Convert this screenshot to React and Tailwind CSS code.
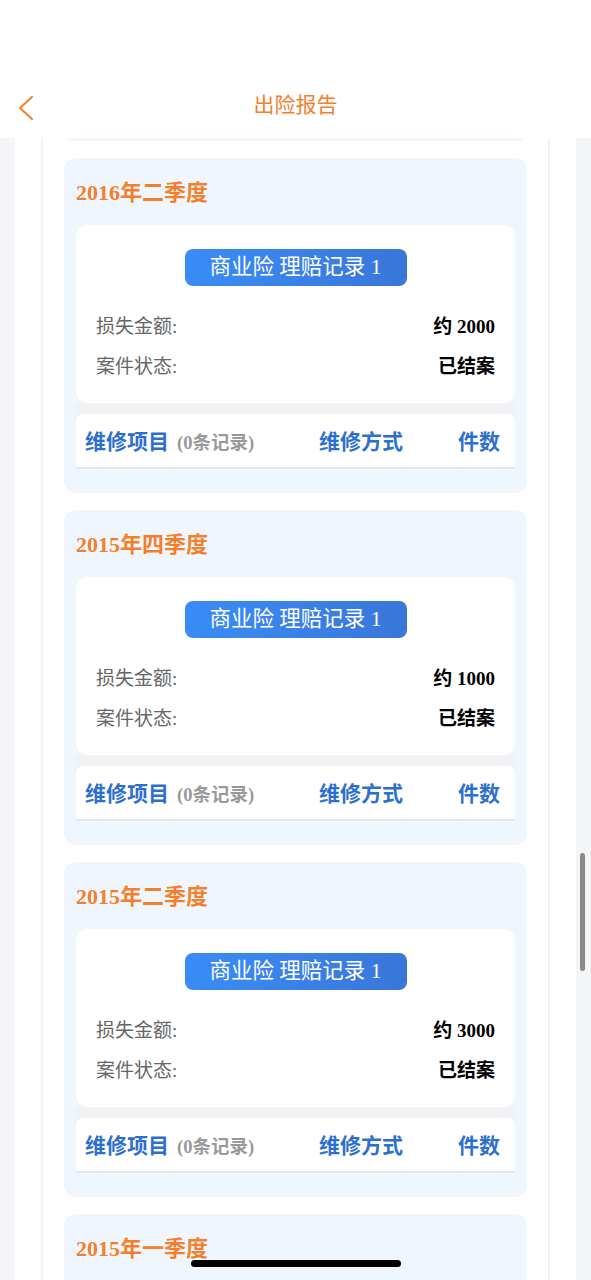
const records = [
  { season: '2016年二季度', amount: '约 2000' },
  { season: '2015年四季度', amount: '约 1000' },
  { season: '2015年二季度', amount: '约 3000' },
  { season: '2015年一季度', amount: '约 2000' },
];

const font = { fontFamily: '"Liberation Serif", "Noto Sans CJK SC", serif' };

function ClaimCard({ season, amount }) {
  return (
    <div className="rounded-xl bg-[#f0f6fe] px-3 pt-[20px] pb-6">
      <h2 className="text-[22px] font-bold leading-[30px] text-[#f47f2a]">{season}</h2>
      <div className="mt-[17px] rounded-xl bg-white px-5 pt-6 pb-4">
        <div className="flex justify-center">
          <div className="flex h-[37px] w-[222px] items-center justify-center rounded-lg bg-gradient-to-r from-[#3a8cf7] to-[#3877d8] text-[21.5px] text-white">
            商业险 理赔记录 1
          </div>
        </div>
        <div className="mt-[21px] text-[19px]">
          <div className="flex h-10 items-center justify-between">
            <span className="text-[#666666]">损失金额:</span>
            <span className="font-bold text-black">{amount}</span>
          </div>
          <div className="flex h-10 items-center justify-between">
            <span className="text-[#666666]">案件状态:</span>
            <span className="font-bold text-black">已结案</span>
          </div>
        </div>
      </div>
      <div className="h-[11px] bg-[#f2f2f4]" />
      <div className="flex h-[55px] items-center rounded-t-lg border-b-2 border-[#e2e6ed] bg-white pt-[5px] pl-[9px] pr-[15px] font-bold">
        <div className="flex flex-1 items-baseline gap-2">
          <span className="text-[21px] text-[#2d6fd1]">维修项目</span>
          <span className="text-[18.5px] text-[#999999]">(0条记录)</span>
        </div>
        <span className="text-[21px] text-[#2d6fd1]">维修方式</span>
        <span className="ml-[55px] text-[21px] text-[#2d6fd1]">件数</span>
      </div>
    </div>
  );
}

export default function App() {
  return (
    <div className="relative h-[1280px] overflow-hidden bg-[#f4f5f7]" style={font}>
      <header className="relative flex h-[138px] items-end justify-center bg-white pb-[19px]">
        <button className="absolute left-[18px] top-[96px]">
          <svg width="16" height="24" viewBox="0 0 16 24" fill="none">
            <polyline points="14,1 2,12 14,23" stroke="#f47f2a" strokeWidth="2" strokeLinecap="round" strokeLinejoin="round" />
          </svg>
        </button>
        <h1 className="text-[21px] text-[#f47f2a]" style={{ fontFamily: '"Noto Sans CJK SC", sans-serif' }}>
          出险报告
        </h1>
      </header>
      <div className="mx-[15px] bg-white px-[26px]">
        <div className="flex flex-col gap-[17px] border-x-2 border-[#f3f3f3] px-[21px]">
          <div className="mx-1 h-[3px] rounded-b-xl bg-[#f0f6fe]" />
          {records.map((r) => (
            <ClaimCard key={r.season} {...r} />
          ))}
        </div>
      </div>
      <div className="absolute left-[580px] top-[853px] h-[118px] w-[5px] rounded-full bg-[#8a8a8a]" />
      <div className="absolute bottom-[13px] left-[191px] h-[7px] w-[210px] rounded-full bg-black" />
    </div>
  );
}
